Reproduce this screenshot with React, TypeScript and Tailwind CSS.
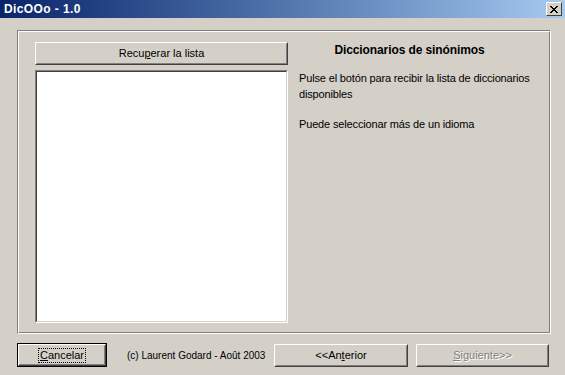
import React from 'react';

const font = { fontFamily: '"Liberation Sans", Arial, sans-serif' };

function Btn({ children, className = '', def = false }: { children: React.ReactNode; className?: string; def?: boolean }) {
    if (def) {
        return (
            <div className={`border border-black ${className}`}>
                <div className="h-full border border-t-white border-l-white border-b-[#404040] border-r-[#404040]">
                    <div className="h-full flex items-center justify-center border border-t-[#d4d0c8] border-l-[#d4d0c8] border-b-[#808080] border-r-[#808080]">
                        {children}
                    </div>
                </div>
            </div>
        );
    }
    return (
        <div className={`border border-t-white border-l-white border-b-[#404040] border-r-[#404040] ${className}`}>
            <div className="h-full flex items-center justify-center border border-t-[#d4d0c8] border-l-[#d4d0c8] border-b-[#808080] border-r-[#808080]">
                {children}
            </div>
        </div>
    );
}

export default function App() {
    return (
        <div className="w-[565px] h-[375px] bg-[#d4d0c8] flex flex-col text-[11px] text-black overflow-hidden" style={font}>
            <div className="h-[18px] flex items-center justify-between pl-[4px] pr-[3px] bg-gradient-to-r from-[#0a246a] to-[#a6caf0]">
                <span className="text-white font-bold text-[12px] leading-none tracking-[0.4px]">DicOOo - 1.0</span>
                <div className="w-[16px] h-[14px] border border-t-white border-l-white border-b-[#404040] border-r-[#404040] bg-[#d4d0c8] flex items-center justify-center">
                    <svg width="8" height="7" viewBox="0 0 8 7">
                        <path d="M0 0 L7 7 M1 0 L8 7 M7 0 L0 7 M8 0 L1 7" stroke="black" strokeWidth="1" />
                    </svg>
                </div>
            </div>
            <div className="flex-1 flex flex-col pt-[12px] pl-[17px] pr-[14px]">
                <div className="h-[304px] border border-t-[#808080] border-l-[#808080] border-b-white border-r-white">
                    <div className="h-full border border-t-white border-l-white border-b-[#808080] border-r-[#808080] flex pl-[16px] pt-[10px] pb-[9px] pr-[4px]">
                        <div className="w-[253px] flex flex-col gap-[5px]">
                            <Btn className="h-[23px]">
                                <span>Recu<span className="underline">p</span>erar la lista</span>
                            </Btn>
                            <div className="flex-1 border border-t-[#808080] border-l-[#808080] border-b-white border-r-white">
                                <div className="h-full border border-t-[#404040] border-l-[#404040] border-b-[#d4d0c8] border-r-[#d4d0c8] bg-white"></div>
                            </div>
                        </div>
                        <div className="w-[232px] pl-[11px] pt-0 tracking-[-0.15px]">
                            <div className="font-bold text-center text-[12px] leading-[16px] tracking-[-0.1px]">Diccionarios de sinónimos</div>
                            <p className="mt-[12px] leading-[16px] whitespace-nowrap">Pulse el botón para recibir la lista de diccionarios</p>
                            <p className="leading-[16px]">disponibles</p>
                            <p className="mt-[14px] leading-[16px]">Puede seleccionar más de un idioma</p>
                        </div>
                    </div>
                </div>
                <div className="flex items-center mt-[9px] h-[24px]">
                    <Btn def className="w-[90px] h-[24px]">
                        <span className="outline-1 outline-dotted outline-black px-[1px] leading-[13px]"><span className="underline">C</span>ancelar</span>
                    </Btn>
                    <span className="ml-[20px] w-[147px] whitespace-nowrap text-[10px]">(c) Laurent Godard - Août 2003</span>
                    <Btn className="w-[134px] h-[23px]">
                        <span>&lt;&lt;An<span className="underline">t</span>erior</span>
                    </Btn>
                    <Btn className="ml-[8px] w-[133px] h-[23px]">
                        <span className="text-[#808080] [text-shadow:1px_1px_0_#ffffff]"><span className="underline">S</span>iguiente&gt;&gt;</span>
                    </Btn>
                </div>
            </div>
        </div>
    );
}
